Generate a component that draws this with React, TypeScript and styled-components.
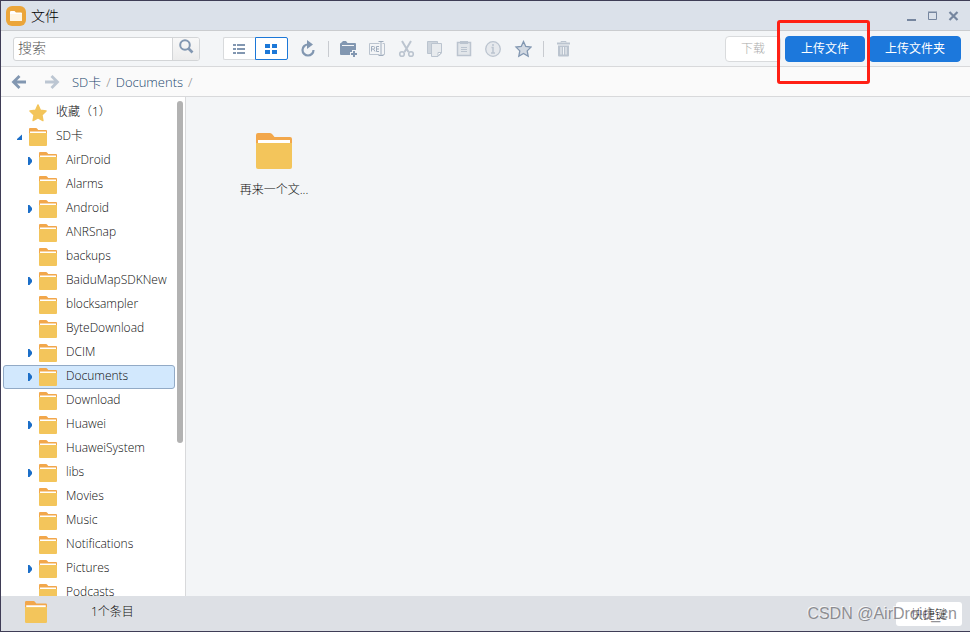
import React from "react";
import styled, { createGlobalStyle, css } from "styled-components";

const GlobalStyle = createGlobalStyle`
  *, *::before, *::after { box-sizing: border-box; }
  body {
    margin: 0;
    font-family: "Open Sans", "Noto Sans CJK SC", sans-serif;
    font-size: 12px;
    font-weight: 300;
    color: #0c0c0c;
  }
  button, input { font: inherit; color: inherit; }
  ul, ol { list-style: none; margin: 0; padding: 0; }
`;

const Window = styled.div`
  display: flex;
  flex-direction: column;
  height: 100vh;
  border: 1px solid #3f3d56;
  border-right-width: 0;
  background: #f3f5f7;
  overflow: hidden;
`;

const TitleBar = styled.header`
  flex: none;
  display: flex;
  align-items: center;
  gap: 5px;
  height: 30px;
  padding: 0 10px 0 5px;
  background: #dbe1ea;
  border-bottom: 1px solid #cacccf;
`;

const Title = styled.h1`
  flex: 1;
  margin: 0;
  font-size: 14px;
  line-height: 20px;
  font-weight: 300;
  color: #000;
`;

const WindowControls = styled.div`
  display: flex;
  gap: 9px;
`;

const PlainButton = styled.button`
  display: flex;
  align-items: center;
  justify-content: center;
  padding: 0;
  border: 0;
  background: none;
`;

const Toolbar = styled.div`
  flex: none;
  display: flex;
  align-items: center;
  height: 36px;
  padding: 0 9px 0 12px;
  border-bottom: 1px solid #d8d9db;
`;

const Search = styled.form`
  display: flex;
  width: 187px;
  height: 24px;
  margin-right: 23px;
  border: 1px solid #d3d5d7;
  border-radius: 3px;
  background: #fff;
  overflow: hidden;
`;

const SearchInput = styled.input`
  flex: 1;
  min-width: 0;
  padding: 0 4px 2px;
  border: 0;
  outline: 0;
  background: none;
  font-size: 14px;
  &::placeholder { color: #555; }
`;

const SearchButton = styled(PlainButton)`
  width: 27px;
  padding-bottom: 6px;
  border-left: 1px solid #d3d5d7;
  background: linear-gradient(#f8f8f8, #ececec);
`;

const ViewButton = styled(PlainButton)<{ $active?: boolean }>`
  width: ${(p) => (p.$active ? 33 : 32)}px;
  height: 23px;
  padding-right: 1px;
  background: #fff;
  border: 1px solid ${(p) => (p.$active ? "#1c78d8" : "#d8dadc")};
  border-right-width: ${(p) => (p.$active ? 1 : 0)}px;
  border-radius: ${(p) => (p.$active ? "0 2px 2px 0" : "2px 0 0 2px")};
  color: ${(p) => (p.$active ? "#1c78d8" : "#8297b1")};
`;

const ToolButton = styled(PlainButton)<{ $strong?: boolean }>`
  width: 29px;
  height: 24px;
  color: ${(p) => (p.$strong ? "#8297b1" : "#bbc4cf")};
`;

const ViewGroup = styled.div`
  display: flex;
  margin-right: 5px;
`;

const Divider = styled.span`
  width: 1px;
  height: 16px;
  margin: 0 5px 0 6px;
  background: #c8cbd0;
`;

const Actions = styled.div`
  display: flex;
  gap: 4px;
  margin-left: auto;
`;

const ActionButton = styled.button<{ $primary?: boolean }>`
  height: 26px;
  padding: 0 15px;
  line-height: 24px;
  border: 1px solid #d9dbdd;
  border-radius: 4px;
  background: #fff;
  color: #aaa;
  white-space: nowrap;
  ${(p) =>
    p.$primary &&
    css`
      border-color: #1c78dc;
      background: #1c78dc;
      color: #fff;
      font-weight: 400;
    `}
`;

const Highlighted = styled.div`
  position: relative;
  display: flex;
`;

const HighlightFrame = styled.span`
  position: absolute;
  inset: -16px -5px -22px -8px;
  border: 3px solid #ff2015;
  border-radius: 3px;
  pointer-events: none;
`;

const PathBar = styled.nav`
  flex: none;
  display: flex;
  align-items: center;
  height: 30px;
  padding: 0 10px;
  background: #fafafa;
  border-bottom: 1px solid #d8d9db;
`;

const PathArrow = styled(PlainButton)`
  width: 16px;
  height: 20px;
  margin-right: 17px;
  color: ${(p) => (p.disabled ? "#bcc6d2" : "#8297b1")};
  & + & { margin-right: 12px; }
`;

const Crumbs = styled.ol`
  display: flex;
  font-size: 13px;
  line-height: 18px;
`;

const Crumb = styled.li`
  &::after {
    content: "/";
    margin: 0 5px;
    color: #888;
  }
`;

const CrumbLink = styled.a`
  color: #24486f;
  text-decoration: none;
`;

const Main = styled.div`
  flex: 1;
  display: flex;
  min-height: 0;
`;

const Sidebar = styled.aside`
  flex: none;
  display: flex;
  width: 185px;
  padding: 4px 2px 0;
  gap: 2px;
  background: #fff;
  border-right: 1px solid #d8d9db;
  overflow: hidden;
`;

const Tree = styled.ul`
  flex: 1;
  min-width: 0;
`;

const TreeRow = styled.button<{ $level: number; $selected: boolean }>`
  display: flex;
  align-items: center;
  width: 100%;
  height: 24px;
  padding: 0 0 0 ${(p) => 13 + p.$level * 10}px;
  border: 1px solid ${(p) => (p.$selected ? "#92aac6" : "transparent")};
  border-radius: 3px;
  background: ${(p) => (p.$selected ? "#d2e8fd" : "transparent")};
  text-align: left;
  white-space: nowrap;
`;

const Twisty = styled.span`
  display: flex;
  width: 12px;
`;

const TreeIcon = styled.span`
  display: flex;
  justify-content: center;
  width: 18px;
  margin-right: 9px;
`;

const Label = styled.span`
  line-height: 18px;
  padding-bottom: 2px;
`;

const ScrollThumb = styled.span`
  flex: none;
  width: 6px;
  height: 69%;
  border-radius: 3px;
  background: #b2b2b2;
`;

const Files = styled.main`
  flex: 1;
  display: flex;
  align-items: flex-start;
  align-content: flex-start;
  flex-wrap: wrap;
  padding: 36px 38px;
`;

const FileTile = styled.button`
  display: flex;
  flex-direction: column;
  align-items: center;
  gap: 12px;
  width: 100px;
  padding: 0;
  border: 0;
  background: none;
  line-height: 18px;
`;

const StatusBar = styled.footer`
  position: relative;
  flex: none;
  display: flex;
  align-items: center;
  height: 35px;
  padding: 0 8px 0 24px;
  background: #dde0e5;
`;

const StatusIcon = styled.span`
  display: flex;
  padding-bottom: 4px;
`;

const Count = styled.span`
  flex: 1;
  padding: 0 0 4px 44px;
  line-height: 18px;
`;

const Shortcuts = styled.button`
  width: 66px;
  height: 24px;
  padding: 0;
  border: 0;
  border-radius: 3px;
  background: #fff;
`;

const Watermark = styled.span`
  position: absolute;
  right: 13px;
  top: 7px;
  font-family: "Liberation Sans", Arial, sans-serif;
  font-size: 16px;
  font-weight: 400;
  line-height: 22px;
  color: rgba(110, 110, 115, 0.75);
  text-shadow: -1px -1px 0 rgba(255, 255, 255, 0.7);
  pointer-events: none;
`;

function Folder({ size }: { size: number }) {
  return (
    <svg width={size} height={size} viewBox="0 0 36 36" aria-hidden="true">
      <path d="M2 0h12q1.500 0 2.500 1.500L18.500 4H34q2 0 2 2v8H0V2Q0 0 2 0z" fill="#f2a74b" />
      <path d="M0 10h36v24q0 2-2 2H2q-2 0-2-2z" fill="#f3c55b" />
      <path d="M2 7h32v3H2z" fill="#fff" />
    </svg>
  );
}

function Star() {
  return (
    <svg width="20" height="20" viewBox="0 0 20 20" aria-hidden="true">
      <path d="M10 1l2.700 5.900 6.300.8-4.600 4.400 1.100 6.400-5.500-3.100-5.500 3.100 1.100-6.400L1 7.700l6.300-.8z" fill="#f3c55b" stroke="#f3c55b" strokeWidth="1.500" strokeLinejoin="round" />
    </svg>
  );
}

function Glyph({ children, size = 18 }: { children: React.ReactNode; size?: number }) {
  return (
    <svg width={size} height={size} viewBox={`0 0 ${size} ${size}`} fill="none" stroke="currentColor" aria-hidden="true">
      {children}
    </svg>
  );
}

const icons = {
  reload: (
    <>
      <path d="M9 4.500A5.500 5.500 0 1 0 14.500 10" strokeWidth="2.200" />
      <path d="M8 0l6 4.500L8 9z" fill="currentColor" stroke="none" />
    </>
  ),
  newFolder: (
    <g fill="currentColor" stroke="none">
      <path d="M1 3l2-2h3l1.500 2H15q1 0 1 1v6h-4v2h-2v3H1q-1 0-1-1V4q0-1 1-1z" />
      <path d="M2 5h12v1H2z" fill="#f3f5f7" />
      <path d="M13 11h2v2h2v2h-2v2h-2v-2h-2v-2h2z" />
    </g>
  ),
  rename: (
    <>
      <path d="M10.500 3.500h-10v11h10M13.500 3.500h2v11h-2" />
      <path d="M2.500 11.500v-5h2q1.200 0 1.200 1.200T4.500 9H2.500m2 0L6 11.500M10 6.500H7.500v5H10M7.500 9H10" stroke="#9facbd" />
      <path d="M9.500 1.500h5M12 1.500v14M9.500 15.500h5" stroke="#9facbd" />
    </>
  ),
  cut: (
    <>
      <path d="M4 1l6.500 11M13 1L6.500 12" strokeWidth="2" />
      <circle cx="4" cy="14" r="2.300" strokeWidth="1.600" />
      <circle cx="13" cy="14" r="2.300" strokeWidth="1.600" />
    </>
  ),
  copy: (
    <>
      <path d="M.5 1.500h10v12H.5z" fill="#cdd4dc" />
      <path d="M4.500 3.500h10v9.500l-3.500 3.500H4.500z" fill="#e8ebee" />
      <path d="M11 16v-3.500h3.500z" fill="#fff" />
    </>
  ),
  paste: (
    <>
      <path d="M1.500 2.500h13v13h-13z" fill="#e2e6ea" strokeWidth="1.500" />
      <path d="M4 1h8v3H4z" fill="currentColor" stroke="none" />
      <path d="M5 7.500h6M5 9.500h6M5 11.500h6" />
    </>
  ),
  info: (
    <>
      <circle cx="8" cy="9" r="7.300" strokeWidth="1.300" fill="#e6e9ed" />
      <path d="M6.500 7.500H8v5M6 13h4M8 4v2" strokeWidth="1.500" />
    </>
  ),
  favourite: (
    <path d="M9.500 1.500l2.300 5 5.200.6-3.800 3.800 1 5.400-4.700-2.800-4.700 2.800 1-5.400L2 7.100l5.200-.6z" fill="#d2d9e2" strokeWidth="1.300" />
  ),
  trash: (
    <>
      <path d="M6 2.500v-1h5v1" />
      <path d="M2 3.500h13" strokeWidth="2" />
      <path d="M3 5.500h11v10q0 1-1 1H4q-1 0-1-1z" fill="currentColor" stroke="none" />
      <path d="M6 7v7.500M8.500 7v7.500M11 7v7.500" stroke="#f3f5f7" />
    </>
  ),
};

const tools: { label: string; icon: React.ReactNode; strong?: boolean }[] = [
  { label: "新建文件夹", icon: icons.newFolder, strong: true },
  { label: "重命名", icon: icons.rename },
  { label: "剪切", icon: icons.cut },
  { label: "复制", icon: icons.copy },
  { label: "粘贴", icon: icons.paste },
  { label: "详情", icon: icons.info },
  { label: "添加收藏", icon: icons.favourite, strong: true },
];

type Node = { name: string; level: number; twisty?: "open" | "closed"; star?: boolean };

const folder = (name: string, hasChildren = false): Node => ({
  name,
  level: 1,
  twisty: hasChildren ? "closed" : undefined,
});

const nodes: Node[] = [
  { name: "收藏（1）", level: 0, star: true },
  { name: "SD卡", level: 0, twisty: "open" },
  folder("AirDroid", true),
  folder("Alarms"),
  folder("Android", true),
  folder("ANRSnap"),
  folder("backups"),
  folder("BaiduMapSDKNew", true),
  folder("blocksampler"),
  folder("ByteDownload"),
  folder("DCIM", true),
  folder("Documents", true),
  folder("Download"),
  folder("Huawei", true),
  folder("HuaweiSystem"),
  folder("libs", true),
  folder("Movies"),
  folder("Music"),
  folder("Notifications"),
  folder("Pictures", true),
  folder("Podcasts"),
];

export default function App() {
  const [selected, setSelected] = React.useState("Documents");
  return (
    <Window>
      <GlobalStyle />
      <TitleBar>
        <svg width="20" height="20" viewBox="0 0 20 20" aria-hidden="true">
          <rect width="20" height="20" rx="6" fill="#eba53a" />
          <path d="M4 6q0-1 1-1h3.500l1.500 1.500h5q1 0 1 1V14q0 1-1 1H5q-1 0-1-1z" fill="#fff" />
          <path d="M4 8h12v6q0 1-1 1H5q-1 0-1-1z" fill="#fff5e2" />
        </svg>
        <Title>文件</Title>
        <WindowControls>
          <PlainButton aria-label="最小化">
            <Glyph size={12}><path d="M1 10h9" strokeWidth="2" stroke="#76869f" /></Glyph>
          </PlainButton>
          <PlainButton aria-label="最大化">
            <Glyph size={12}><path d="M1.500 2.500h8v7h-8zM1 2h9" stroke="#76869f" /></Glyph>
          </PlainButton>
          <PlainButton aria-label="关闭">
            <Glyph size={12}><path d="M1.500 2l8 8M9.500 2l-8 8" strokeWidth="2.200" stroke="#76869f" /></Glyph>
          </PlainButton>
        </WindowControls>
      </TitleBar>

      <Toolbar>
        <Search onSubmit={(e) => e.preventDefault()}>
          <SearchInput placeholder="搜索" aria-label="搜索" />
          <SearchButton type="submit" aria-label="开始搜索">
            <svg width="16" height="16" viewBox="0 0 16 16" fill="none" stroke="#8297b1" aria-hidden="true">
              <circle cx="7" cy="7" r="4.800" strokeWidth="2" />
              <path d="M10.500 10.500l4 4" strokeWidth="2.600" />
            </svg>
          </SearchButton>
        </Search>
        <ViewGroup>
          <ViewButton aria-label="列表视图">
            <svg width="12" height="10" viewBox="0 0 12 10" fill="currentColor" aria-hidden="true">
              <path d="M0 0h3v2H0zM4 0h8v2H4zM0 4h3v2H0zM4 4h8v2H4zM0 8h3v2H0zM4 8h8v2H4z" />
            </svg>
          </ViewButton>
          <ViewButton $active aria-label="网格视图">
            <svg width="12" height="10" viewBox="0 0 12 10" fill="currentColor" aria-hidden="true">
              <path d="M0 0h5v4H0zM7 0h5v4H7zM0 6h5v4H0zM7 6h5v4H7z" />
            </svg>
          </ViewButton>
        </ViewGroup>
        <ToolButton $strong aria-label="刷新"><Glyph>{icons.reload}</Glyph></ToolButton>
        <Divider />
        {tools.map((t) => (
          <ToolButton key={t.label} $strong={t.strong} aria-label={t.label}>
            <Glyph>{t.icon}</Glyph>
          </ToolButton>
        ))}
        <Divider />
        <ToolButton aria-label="删除"><Glyph>{icons.trash}</Glyph></ToolButton>
        <Actions>
          <ActionButton disabled>下载</ActionButton>
          <Highlighted>
            <ActionButton $primary>上传文件</ActionButton>
            <HighlightFrame />
          </Highlighted>
          <ActionButton $primary>上传文件夹</ActionButton>
        </Actions>
      </Toolbar>

      <PathBar aria-label="路径">
        <PathArrow aria-label="后退">
          <Glyph size={16}><path d="M15 8H3M8.500 2L2.500 8l6 6" strokeWidth="2.800" /></Glyph>
        </PathArrow>
        <PathArrow disabled aria-label="前进">
          <Glyph size={16}><path d="M1 8h12M7.500 2l6 6-6 6" strokeWidth="2.800" /></Glyph>
        </PathArrow>
        <Crumbs>
          <Crumb><CrumbLink href="#sd">SD卡</CrumbLink></Crumb>
          <Crumb><CrumbLink href="#documents">Documents</CrumbLink></Crumb>
        </Crumbs>
      </PathBar>

      <Main>
        <Sidebar>
          <Tree>
            {nodes.map((n) => (
              <li key={n.name}>
                <TreeRow $level={n.level} $selected={n.name === selected} onClick={() => setSelected(n.name)}>
                  <Twisty>
                    {n.twisty && (
                      <svg width="6" height="8" viewBox="0 0 6 8" fill="#1b6ec8" aria-hidden="true">
                        <path d={n.twisty === "open" ? "M5 1.500V7H0V6z" : "M1 0h1.500L5 3v2L2.500 8H1z"} />
                      </svg>
                    )}
                  </Twisty>
                  <TreeIcon>{n.star ? <Star /> : <Folder size={18} />}</TreeIcon>
                  <Label>{n.name}</Label>
                </TreeRow>
              </li>
            ))}
          </Tree>
          <ScrollThumb />
        </Sidebar>
        <Files>
          <FileTile>
            <Folder size={36} />
            再来一个文...
          </FileTile>
        </Files>
      </Main>

      <StatusBar>
        <StatusIcon><Folder size={22} /></StatusIcon>
        <Count>1个条目</Count>
        <Shortcuts>快捷键</Shortcuts>
        <Watermark>CSDN @AirDroid_cn</Watermark>
      </StatusBar>
    </Window>
  );
}
